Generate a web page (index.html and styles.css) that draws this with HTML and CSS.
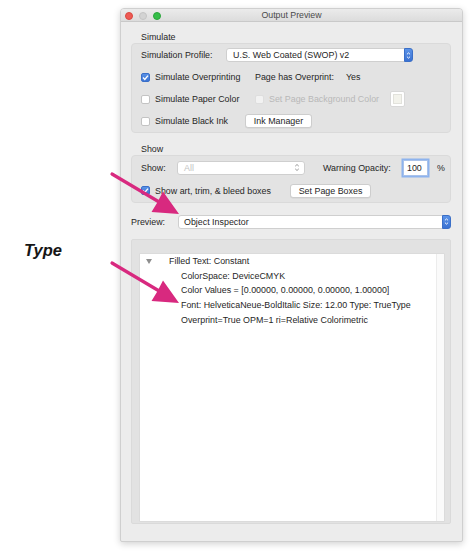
FILE: index.html
```html
<!DOCTYPE html>
<html>
<head>
<meta charset="utf-8">
<title>Output Preview</title>
<link rel="stylesheet" href="styles.css">
</head>
<body>
<div class="page">
  <div class="annot-type">Type</div>
  <svg class="arrows" width="474" height="553" viewBox="0 0 474 553">
    <g fill="#d8297f" stroke="#d8297f">
      <line x1="112" y1="174" x2="160" y2="202.5" stroke-width="3.2" stroke-linecap="round"/>
      <polygon stroke="none" points="179,214 151.5,212 157,203 163,191.5"/>
      <line x1="112" y1="263" x2="160" y2="291.5" stroke-width="3.2" stroke-linecap="round"/>
      <polygon stroke="none" points="179,303 151.5,301 157,292 163,280.5"/>
    </g>
  </svg>

  <div class="window">
    <div class="titlebar">
      <div class="lights">
        <span class="light red"></span>
        <span class="light gray"></span>
        <span class="light green"></span>
      </div>
      <div class="title">Output Preview</div>
    </div>

    <div class="content">
      <div class="section-label">Simulate</div>
      <div class="group g1">
        <div class="row r22">
          <span class="cell w85">Simulation Profile:</span>
          <div class="select sel-profile">
            <span class="sel-text">U.S. Web Coated (SWOP) v2</span>
            <span class="stepper blue">
              <svg width="8" height="11" viewBox="0 0 8 11"><path d="M2.2 4.2 L4 2.5 L5.8 4.2 M2.2 6.8 L4 8.5 L5.8 6.8" fill="none" stroke="#fff" stroke-width="1.1"/></svg>
            </span>
          </div>
        </div>
        <div class="row r22">
          <span class="cell w114 check"><span class="cb on"><svg width="9" height="9" viewBox="0 0 9 9"><path d="M2 4.6 L3.8 6.4 L7 2.6" fill="none" stroke="#fff" stroke-width="1.4"/></svg></span>Simulate Overprinting</span>
          <span class="cell w91">Page has Overprint:</span>
          <span class="cell">Yes</span>
        </div>
        <div class="row r22">
          <span class="cell w114 check"><span class="cb"></span>Simulate Paper Color</span>
          <span class="cell w135 check disabled"><span class="cb dis"></span>Set Page Background Color</span>
          <span class="swatch"><span class="swatch-in"></span></span>
        </div>
        <div class="row r22">
          <span class="cell w104 check"><span class="cb"></span>Simulate Black Ink</span>
          <span class="btn w67">Ink Manager</span>
        </div>
      </div>

      <div class="section-label mt10">Show</div>
      <div class="group g2">
        <div class="row r23">
          <span class="cell w36">Show:</span>
          <div class="select sel-show">
            <span class="sel-text dim">All</span>
            <span class="stepper plain">
              <svg width="8" height="11" viewBox="0 0 8 11"><path d="M2.2 4.2 L4 2.5 L5.8 4.2 M2.2 6.8 L4 8.5 L5.8 6.8" fill="none" stroke="#9a9a9a" stroke-width="1"/></svg>
            </span>
          </div>
          <span class="cell w80 ml18">Warning Opacity:</span>
          <span class="field">100</span>
          <span class="cell pct">%</span>
        </div>
        <div class="row r23">
          <span class="cell w149 check"><span class="cb on"><svg width="9" height="9" viewBox="0 0 9 9"><path d="M2 4.6 L3.8 6.4 L7 2.6" fill="none" stroke="#fff" stroke-width="1.4"/></svg></span>Show art, trim, &amp; bleed boxes</span>
          <span class="btn w81">Set Page Boxes</span>
        </div>
      </div>

      <div class="row preview-row">
        <span class="cell w47">Preview:</span>
        <div class="select sel-preview">
          <span class="sel-text">Object Inspector</span>
          <span class="stepper blue">
            <svg width="8" height="11" viewBox="0 0 8 11"><path d="M2.2 4.2 L4 2.5 L5.8 4.2 M2.2 6.8 L4 8.5 L5.8 6.8" fill="none" stroke="#fff" stroke-width="1.1"/></svg>
          </span>
        </div>
      </div>

      <div class="frame">
        <div class="tree">
          <div class="tree-lines">
            <div class="tree-row"><span class="disclosure"></span><span class="node">Filled Text: Constant</span></div>
            <div class="tree-row child">ColorSpace: DeviceCMYK</div>
            <div class="tree-row child">Color Values = [0.00000, 0.00000, 0.00000, 1.00000]</div>
            <div class="tree-row child">Font: HelveticaNeue-BoldItalic Size: 12.00 Type: TrueType</div>
            <div class="tree-row child">Overprint=True OPM=1 ri=Relative Colorimetric</div>
          </div>
          <div class="scroll-track"></div>
        </div>
      </div>
    </div>
  </div>
</div>
</body>
</html>
```

FILE: styles.css
```css
* { box-sizing: border-box; }

html, body {
  margin: 0;
  padding: 0;
  background: #ffffff;
}

body {
  font-family: "Liberation Sans", Arial, sans-serif;
  font-size: 8.9px;
  color: #262626;
}

.page {
  position: relative;
  width: 474px;
  height: 553px;
  padding-top: 8px;
  padding-left: 120px;
}

.annot-type {
  position: absolute;
  left: 24px;
  top: 240px;
  font-size: 16.5px;
  font-weight: bold;
  font-style: italic;
  color: #161616;
  line-height: 20px;
}

.arrows {
  position: absolute;
  left: 0;
  top: 0;
  z-index: 10;
  pointer-events: none;
}

.window {
  width: 343px;
  height: 534px;
  background: #ececec;
  border: 1px solid #cfcfcf;
  border-radius: 4px 4px 2px 2px;
  box-shadow: 0 2px 7px rgba(0, 0, 0, 0.18);
  display: flex;
  flex-direction: column;
  overflow: hidden;
}

.titlebar {
  height: 13px;
  flex: none;
  background: linear-gradient(#ebebeb, #dcdcdc);
  border-bottom: 1px solid #c9c9c9;
  display: flex;
  align-items: center;
  position: relative;
}

.lights {
  display: flex;
  gap: 6px;
  padding-left: 4px;
  padding-top: 1px;
}

.light {
  width: 8px;
  height: 8px;
  border-radius: 50%;
  display: block;
}
.light.red { background: #ee5a54; border: 0.5px solid #d9473f; }
.light.gray { background: #d3d3d3; border: 0.5px solid #c4c4c4; }
.light.green { background: #35be48; border: 0.5px solid #2aa43b; }

.title {
  position: absolute;
  left: 0;
  right: 0;
  top: 0;
  line-height: 13px;
  text-align: center;
  color: #4a4a4a;
  font-size: 8.8px;
}

.content {
  padding: 9px 11px 0 10px;
  display: flex;
  flex-direction: column;
}

.section-label {
  line-height: 12px;
  padding-left: 10px;
}
.mt10 { margin-top: 10px; }

.group {
  background: #e3e3e3;
  border: 1px solid #dadada;
  border-radius: 4px;
  padding: 0 9px;
}

.g1 { height: 90px; }
.g2 { height: 48px; }

.row {
  display: flex;
  align-items: center;
  white-space: nowrap;
}
.r22 { height: 22px; }
.r23 { height: 23px; }

.cell { display: inline-flex; align-items: center; flex: none; }
.w36 { width: 36px; }
.w47 { width: 47px; }
.w80 { width: 80px; }
.w85 { width: 85px; }
.w91 { width: 91px; }
.w104 { width: 104px; }
.w114 { width: 114px; }
.w135 { width: 135px; }
.w149 { width: 149px; }
.ml18 { margin-left: 18px; }

.check .cb { margin-right: 5px; }
.disabled { color: #b8b8b8; }

.cb {
  width: 9px;
  height: 9px;
  flex: none;
  border-radius: 2px;
  background: #ffffff;
  border: 1px solid #c3c3c3;
  display: inline-block;
  position: relative;
}
.cb svg { position: absolute; left: -1px; top: -1px; }
.cb.on {
  background: linear-gradient(#5a92e6, #3c74d4);
  border-color: #3a6fc9;
}
.cb.dis {
  background: #f2f2f2;
  border-color: #dedede;
}

.select {
  height: 14px;
  background: #ffffff;
  border: 1px solid #cfcfcf;
  border-radius: 3px;
  display: flex;
  align-items: center;
  justify-content: space-between;
  flex: none;
  padding-left: 6px;
}
.sel-profile { width: 187px; }
.sel-show { width: 128px; }
.sel-preview { width: 273px; padding-left: 5px; }

.sel-text { line-height: 12px; }
.sel-text.dim { color: #c2c2c2; }

.stepper {
  width: 9px;
  height: 14px;
  margin-right: -1px;
  display: flex;
  align-items: center;
  justify-content: center;
  border-radius: 0 3px 3px 0;
}
.stepper.blue {
  background: linear-gradient(#5b93e8, #3a71d2);
  border: 1px solid #3a6fc8;
}
.stepper.plain {
  background: transparent;
  margin-right: 3px;
}

.btn {
  height: 14px;
  background: #ffffff;
  border: 1px solid #cdcdcd;
  border-radius: 3px;
  display: inline-flex;
  align-items: center;
  justify-content: center;
  flex: none;
  box-shadow: 0 0.5px 0 rgba(0, 0, 0, 0.08);
}
.w67 { width: 67px; }
.w81 { width: 81px; }

.swatch {
  width: 15px;
  height: 16px;
  background: #ffffff;
  border: 1px solid #d8d8d8;
  border-radius: 2px;
  display: flex;
  align-items: center;
  justify-content: center;
}
.swatch-in {
  width: 9px;
  height: 10px;
  background: #f3f3ec;
  border: 1px solid #e2e2dc;
}

.field {
  width: 25px;
  height: 16px;
  background: #ffffff;
  border: 1px solid #a9c2ea;
  box-shadow: 0 0 0 1.5px #8db3ee;
  display: flex;
  align-items: center;
  padding-left: 3px;
  flex: none;
}
.pct { margin-left: 9px; }

.preview-row {
  height: 15px;
  margin-top: 11px;
}

.frame {
  margin-top: 10px;
  height: 285px;
  background: #e2e2e2;
  border: 1px solid #dadada;
  border-radius: 2px;
  padding: 14px 6px 2px 8px;
  display: flex;
}

.tree {
  flex: 1;
  background: #ffffff;
  display: flex;
  box-shadow: 0 0 0 0.5px #d4d4d4;
}

.tree-lines {
  flex: 1;
  padding-top: 0;
}

.scroll-track {
  width: 8px;
  background: #fafafa;
  border-left: 1px solid #ececec;
}

.tree-row {
  line-height: 14.7px;
  height: 14.7px;
  white-space: nowrap;
  display: flex;
  align-items: center;
}
.tree-row.child { padding-left: 41px; }

.disclosure {
  width: 0;
  height: 0;
  margin-left: 6px;
  margin-right: 17px;
  border-left: 3px solid transparent;
  border-right: 3px solid transparent;
  border-top: 5px solid #8e8e8e;
}
```
